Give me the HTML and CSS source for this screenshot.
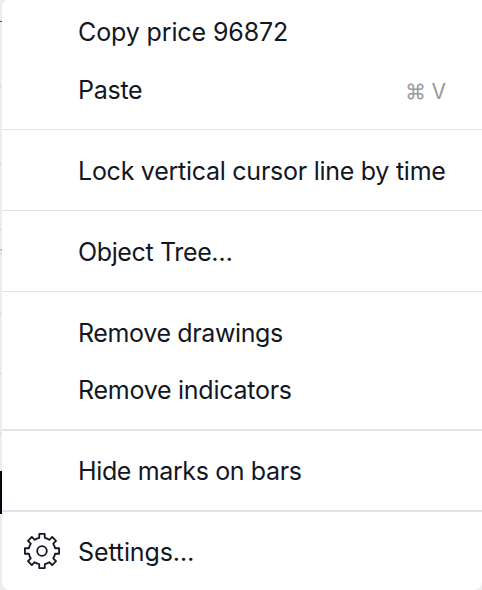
FILE: index.html
```html
<!DOCTYPE html>
<html lang="en">
<head>
<meta charset="utf-8">
<title>Chart menu</title>
<link rel="stylesheet" href="styles.css">
</head>
<body>
<div class="chart">
  <i class="tick dark" style="top:21px"></i>
  <i class="tick" style="top:86px"></i>
  <i class="tick" style="top:163px"></i>
  <i class="tick" style="top:229px"></i>
  <i class="tick thick" style="top:249px"></i>
  <i class="tick" style="top:253px"></i>
  <i class="tick" style="top:313px"></i>
  <i class="tick" style="top:373px"></i>
  <i class="tick" style="top:433px"></i>
  <i class="price-label"></i>
</div>
<div class="menu">
  <div class="group first">
    <div class="item"><span class="label wide">Copy price 96872</span></div>
    <div class="item"><span class="label">Paste</span><span class="shortcut">⌘ V</span></div>
  </div>
  <div class="group"><div class="item"><span class="label">Lock vertical cursor line by time</span></div></div>
  <div class="group"><div class="item"><span class="label tight">Object Tree…</span></div></div>
  <div class="group">
    <div class="item"><span class="label tight">Remove drawings</span></div>
    <div class="item"><span class="label">Remove indicators</span></div>
  </div>
  <div class="group strong"><div class="item"><span class="label tight">Hide marks on bars</span></div></div>
  <div class="group strong">
    <div class="item">
      <svg class="gear" viewBox="-19 -19 38 38" width="38" height="38">
        <path d="M-2.75-13.11V-17.1H2.75V-13.11Q5.2-12.6 7.33-11.21L10.15-14.04L14.04-10.15L11.21-7.33Q12.6-5.2 13.11-2.75H17.1V2.75H13.11Q12.6 5.2 11.21 7.33L14.04 10.15L10.15 14.04L7.33 11.21Q5.2 12.6 2.75 13.11V17.1H-2.75V13.11Q-5.2 12.6-7.33 11.21L-10.15 14.04L-14.04 10.15L-11.21 7.33Q-12.6 5.2-13.11 2.75H-17.1V-2.75H-13.11Q-12.6-5.2-11.21-7.33L-14.04-10.15L-10.15-14.04L-7.33-11.21Q-5.2-12.6-2.75-13.11Z"/>
        <circle r="4.8"/>
      </svg>
      <span class="label wide">Settings…</span>
    </div>
  </div>
</div>
</body>
</html>
```
FILE: styles.css
```css
body {
  margin: 0;
  height: 590px;
  overflow: hidden;
  background: #ececec;
  font-family: Inter, "Liberation Sans", sans-serif;
  color: #131722;
}
.tick {
  position: absolute;
  left: 0;
  width: 2px;
  height: 1px;
  background: #d6d6d8;
}
.tick.dark { background: #444; }
.tick.thick { height: 2px; background: #c8c8c8; }
.price-label {
  position: absolute;
  left: 0;
  top: 471px;
  width: 2px;
  height: 43px;
  background: #05070f;
}
.menu {
  position: relative;
  box-sizing: border-box;
  margin-left: 2px;
  height: 590px;
  background: #fff;
  border-radius: 6px 0 8px 8px;
}
.group {
  box-sizing: border-box;
  border-top: 1px solid #e0e3eb;
  padding: 12px 0 11px;
}
.group.first {
  border-top: 0;
  padding: 3px 0 10px;
}
.group.strong {
  border-top: 2px solid #e0e3eb;
  padding: 11px 0;
}
.item {
  position: relative;
  display: flex;
  align-items: center;
  height: 57px;
  padding: 0 36px 0 76px;
}
.first .item { height: 58px; }
.label {
  font-size: 25px;
  line-height: 30px;
  letter-spacing: -0.26px;
  white-space: nowrap;
}
.label.wide { letter-spacing: -0.12px; }
.label.tight { letter-spacing: -0.37px; }
.shortcut {
  margin-left: auto;
  padding-top: 4px;
  font-size: 21px;
  line-height: 30px;
  word-spacing: -0.5px;
  color: #98999e;
}
.gear {
  position: absolute;
  left: 21px;
  top: 9px;
  fill: none;
  stroke: #131722;
  stroke-width: 1.8;
  stroke-linejoin: round;
}
```
